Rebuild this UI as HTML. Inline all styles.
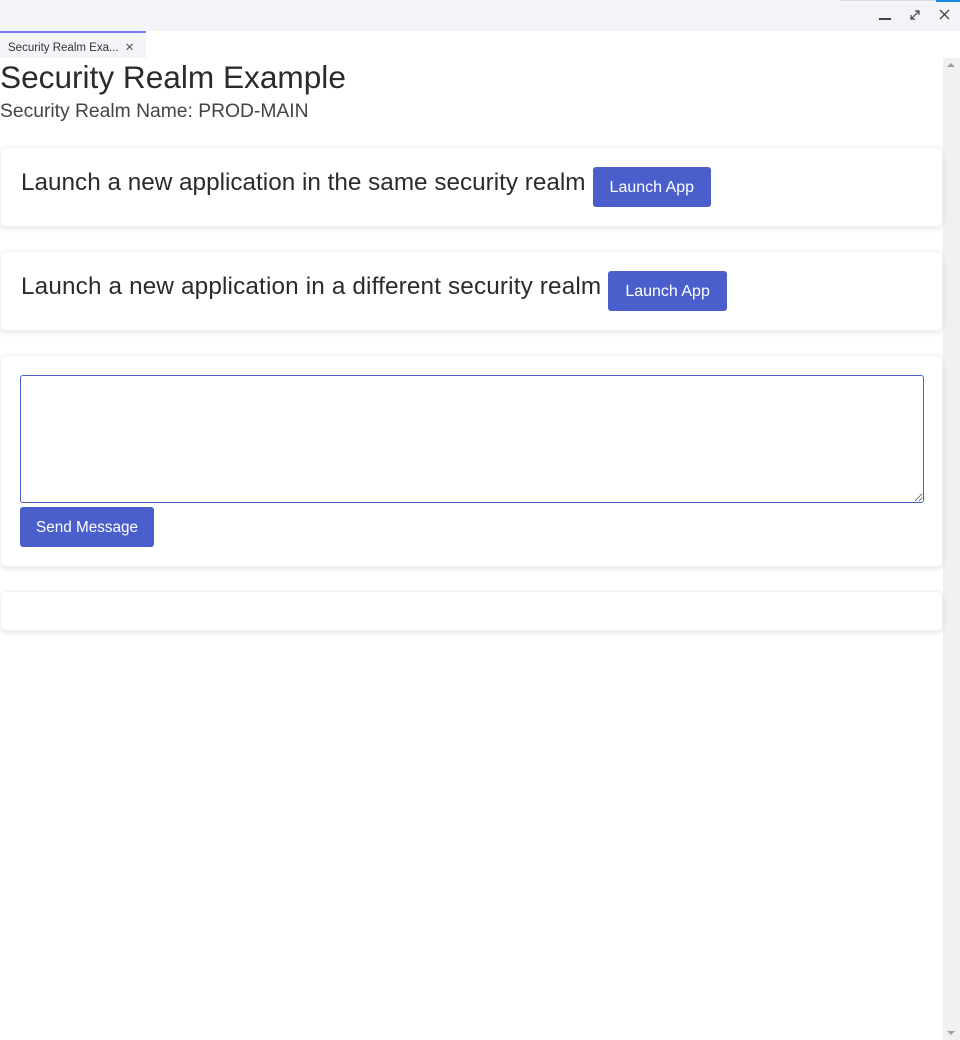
<!DOCTYPE html>
<html><head><style>
*{box-sizing:border-box;margin:0;padding:0}
body{width:960px;height:1040px;overflow:hidden;background:#fff;font-family:"Liberation Sans",sans-serif;color:#333;position:relative}
.top{position:absolute;left:0;top:0;width:960px;height:31px;background:#f3f4f8}
.tab{position:absolute;left:0;top:31px;width:146px;height:27px;background:#f3f4f8;border-top:2px solid #7b7bf0;font-size:11.5px;padding:7px 0 0 8px;color:#333}
.scroll{position:absolute;left:943px;top:58px;width:17px;height:982px;background:#f1f1f1}
h1{position:absolute;left:0;top:59px;font-size:31.6px;font-weight:normal;color:#2b2b2b}
.sub{position:absolute;left:0;top:101px;font-size:19.3px;color:#444}
.card{position:absolute;left:0;width:943px;background:#fff;border-radius:6px;box-shadow:0 2px 6px rgba(0,0,0,.1);border:1px solid #f2f2f2}
.card h2{font-size:24.3px;font-weight:normal;color:#2b2b2b;display:inline-block;vertical-align:middle;position:relative;top:-4px}
.btn{display:inline-block;background:#4a5fcb;color:#fff;font-size:16px;border-radius:3px;height:40px;line-height:42px;padding:0 17px;vertical-align:middle;margin-left:7px}
textarea{position:absolute;left:19px;top:19px;width:904px;height:128px;border:1px solid #4a5fcb;border-radius:3px}
</style></head><body>
<div class="top">
<div style="position:absolute;left:840px;top:0;width:96px;height:1px;background:#ddd"></div>
<div style="position:absolute;left:936px;top:0;width:24px;height:2px;background:#1a8ae0"></div>
<div style="position:absolute;left:879px;top:18px;width:12px;height:1.5px;background:#444"></div>
<svg style="position:absolute;left:909px;top:9px" width="12" height="12" viewBox="0 0 12 12" fill="none" stroke="#444" stroke-width="1.2"><path d="M2 10L10 2M6 2h4v4M2 6v4h4"/></svg>
<svg style="position:absolute;left:939px;top:9px" width="11" height="11" viewBox="0 0 11 11" stroke="#444" stroke-width="1.3"><path d="M1 1L10 10M10 1L1 10"/></svg>
</div>
<div class="tab">Security Realm Exa... <span style="margin-left:3px;color:#555">✕</span></div>
<div class="scroll"><div style="position:absolute;left:4px;top:5px;border:4px solid transparent;border-bottom:4px solid #a0a0a0;border-top:0"></div><div style="position:absolute;left:4px;bottom:5px;border:4px solid transparent;border-top:4px solid #a0a0a0;border-bottom:0"></div></div>
<h1>Security Realm Example</h1>
<div class="sub">Security Realm Name: PROD-MAIN</div>
<div class="card" style="top:147px;height:80px;padding:19px 0 0 20px"><h2>Launch a new application in the same security realm</h2><span class="btn">Launch App</span></div>
<div class="card" style="top:251px;height:80px;padding:19px 0 0 20px"><h2 style="letter-spacing:.15px">Launch a new application in a different security realm</h2><span class="btn">Launch App</span></div>
<div class="card" style="top:355px;height:212px"><textarea></textarea><span class="btn" style="position:absolute;left:19px;top:151px;margin:0;font-size:15.3px;padding:0 16px">Send Message</span></div>
<div class="card" style="top:591px;height:40px"></div>
</body></html>
